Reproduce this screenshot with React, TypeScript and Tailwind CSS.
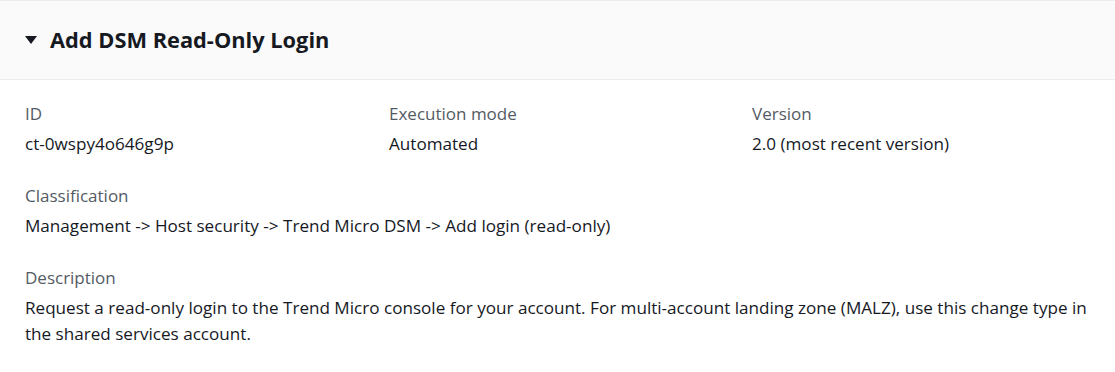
import React from "react";

const font = { fontFamily: '"Open Sans", "Noto Sans", Arial, sans-serif' };

function Field({ label, value }: { label: string; value: React.ReactNode }) {
  return (
    <div className="flex flex-col">
      <div className="text-[17px] leading-[22px] text-[#545b64]">{label}</div>
      <div className="mt-[8px] text-[17.1px] leading-[22px] text-[#16191f]">{value}</div>
    </div>
  );
}

export default function App() {
  return (
    <div className="w-[1115px] h-[372px] bg-white font-['Open_Sans',sans-serif]" style={font}>
      <div className="h-[80px] bg-[#fafafa] border-t border-b border-[#eaeded] flex items-center pl-[25px]">
        <svg width="12" height="10" viewBox="0 0 12 10" className="mr-[13px]">
          <polygon points="0,1 12,1 6,9" fill="#16191f" />
        </svg>
        <h2 className="text-[21.8px] font-bold text-[#16191f] leading-[28px]">Add DSM Read-Only Login</h2>
      </div>
      <div className="px-[25px] pt-[23px]">
        <div className="grid grid-cols-[364px_363px_1fr]">
          <Field label="ID" value="ct-0wspy4o646g9p" />
          <Field label="Execution mode" value="Automated" />
          <Field label="Version" value="2.0 (most recent version)" />
        </div>
        <div className="mt-[30px]">
          <Field label="Classification" value="Management -> Host security -> Trend Micro DSM -> Add login (read-only)" />
        </div>
        <div className="mt-[30px]">
          <div className="text-[17px] leading-[22px] text-[#545b64]">Description</div>
          <div className="mt-[6px] text-[17.1px] leading-[26px] text-[#16191f]">
            Request a read-only login to the Trend Micro console for your account. For multi-account landing zone (MALZ), use this change type in the shared services account.
          </div>
        </div>
      </div>
    </div>
  );
}
